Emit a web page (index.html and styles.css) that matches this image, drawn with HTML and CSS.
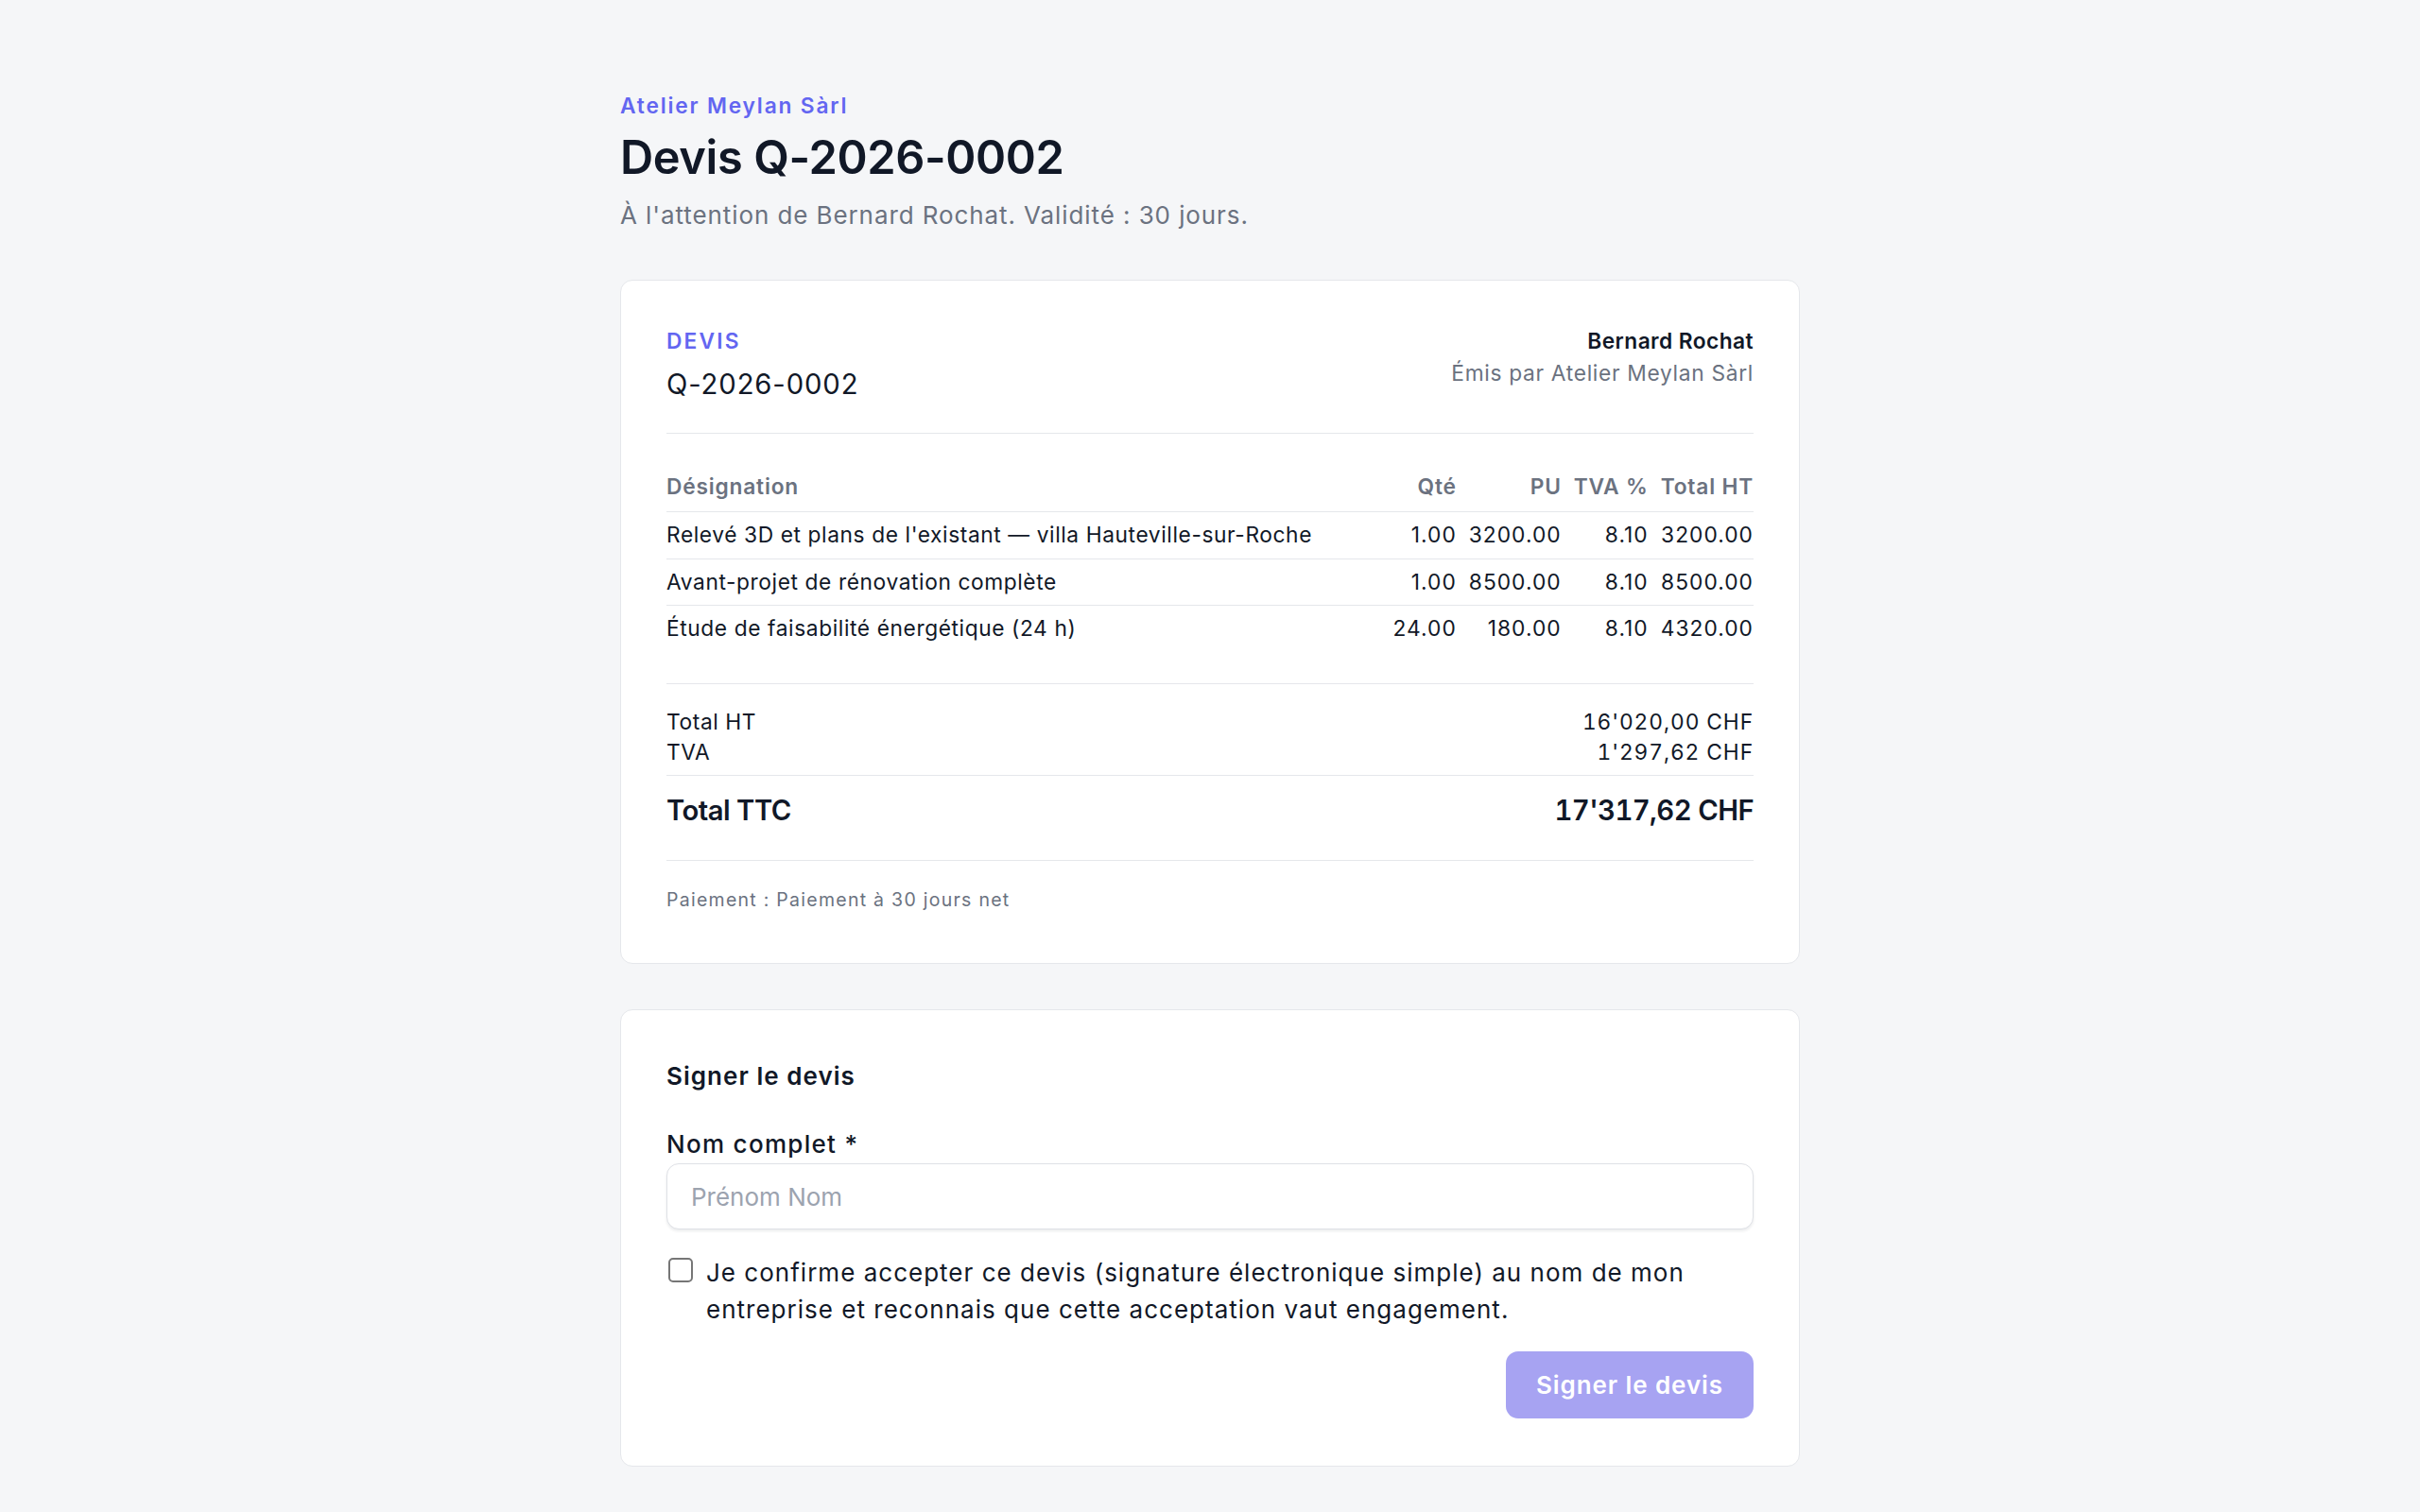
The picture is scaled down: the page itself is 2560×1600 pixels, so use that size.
FILE: index.html
```html
<!DOCTYPE html>
<html lang="fr">
<head>
    <meta charset="UTF-8">
    <title>Devis Q-2026-0002</title>
    <link rel="stylesheet" href="styles.css">
</head>
<body>
    <div class="page">
        <p class="brand">Atelier Meylan Sàrl</p>
        <h1 class="title">Devis Q-2026-0002</h1>
        <p class="lead">À l'attention de Bernard Rochat. Validité : 30 jours.</p>

        <!-- document du devis -->
        <div class="card">
            <div class="doc-head">
                <div>
                    <div class="doc-kind">Devis</div>
                    <div class="doc-number">Q-2026-0002</div>
                </div>
                <div class="doc-client">
                    <div class="client-name">Bernard Rochat</div>
                    <div class="client-from">Émis par Atelier Meylan Sàrl</div>
                </div>
            </div>

            <table class="lines">
                <thead>
                    <tr>
                        <th>Désignation</th>
                        <th class="num">Qté</th>
                        <th class="num">PU</th>
                        <th class="num">TVA %</th>
                        <th class="num">Total HT</th>
                    </tr>
                </thead>
                <tbody>
                    <tr>
                        <td>Relevé 3D et plans de l'existant — villa Hauteville-sur-Roche</td>
                        <td class="num">1.00</td>
                        <td class="num">3200.00</td>
                        <td class="num">8.10</td>
                        <td class="num">3200.00</td>
                    </tr>
                    <tr>
                        <td>Avant-projet de rénovation complète</td>
                        <td class="num">1.00</td>
                        <td class="num">8500.00</td>
                        <td class="num">8.10</td>
                        <td class="num">8500.00</td>
                    </tr>
                    <tr>
                        <td>Étude de faisabilité énergétique (24 h)</td>
                        <td class="num">24.00</td>
                        <td class="num">180.00</td>
                        <td class="num">8.10</td>
                        <td class="num">4320.00</td>
                    </tr>
                </tbody>
            </table>

            <div class="totals">
                <div class="total-row"><span>Total HT</span><span class="amount">16'020,00 CHF</span></div>
                <div class="total-row"><span>TVA</span><span class="amount">1'297,62 CHF</span></div>
                <div class="total-row grand"><span>Total TTC</span><span class="amount">17'317,62 CHF</span></div>
            </div>

            <p class="terms">Paiement : Paiement à 30 jours net</p>
        </div>

        <!-- signature -->
        <form class="card sign" onsubmit="return false">
            <h2 class="sign-title">Signer le devis</h2>
            <label class="field-label" for="fullname">Nom complet *</label>
            <input class="field" id="fullname" type="text" placeholder="Prénom Nom">
            <label class="agree">
                <input type="checkbox">
                <span>Je confirme accepter ce devis (signature électronique simple) au nom de mon entreprise et reconnais que cette acceptation vaut engagement.</span>
            </label>
            <div class="actions">
                <button class="btn" type="submit" disabled>Signer le devis</button>
            </div>
        </form>
    </div>
</body>
</html>
```

FILE: styles.css
```css
* {
    margin: 0;
    padding: 0;
    box-sizing: border-box;
}
body {
    background: #f5f6f8;
    color: #111827;
    font-family: "Inter", "Noto Sans", sans-serif;
    letter-spacing: 0.04em;
}
.page {
    width: 1248px;
    margin: 0 auto;
    padding: 96px 0 49px;
}

/*en-tête de page*/
.brand {
    font-size: 22.75px;
    line-height: 32.5px;
    font-weight: 600;
    letter-spacing: 0.08em;
    color: #6366f1;
}
.title {
    margin-top: 9px;
    font-size: 48.75px;
    line-height: 58.5px;
    font-weight: 600;
    letter-spacing: -0.4px;
}
.lead {
    margin-top: 12px;
    font-size: 26px;
    line-height: 39px;
    letter-spacing: 0.035em;
    color: #6b7280;
}

/*cartes*/
.card {
    display: block;
    margin-top: 49px;
    padding: 48px;
    background: #fff;
    border: 1px solid #e5e7eb;
    border-radius: 13px;
}
.card + .card {
    margin-top: 48px;
    padding-top: 50px;
    padding-bottom: 50px;
}

.doc-head {
    display: flex;
    justify-content: space-between;
    align-items: flex-start;
    padding-bottom: 29px;
    border-bottom: 1px solid #e5e7eb;
    letter-spacing: 0.026em;
}
.doc-kind {
    font-size: 22.75px;
    line-height: 32.5px;
    font-weight: 600;
    letter-spacing: 0.095em;
    text-transform: uppercase;
    color: #6366f1;
}
.doc-number {
    margin-top: 6px;
    font-size: 29.25px;
    line-height: 45px;
    letter-spacing: 0.03em;
}
.doc-client {
    text-align: right;
}
.client-name {
    font-size: 22.75px;
    line-height: 32.5px;
    font-weight: 600;
}
.client-from {
    margin-top: 1px;
    font-size: 22.75px;
    line-height: 32.5px;
    letter-spacing: 0.03em;
    color: #6b7280;
}

/*lignes du devis*/
.lines {
    width: 100%;
    margin-top: 32px;
    border-collapse: collapse;
    font-size: 22.75px;
    line-height: 32.5px;
    letter-spacing: 0.026em;
}
.lines th {
    padding: 8px 0 10px 13px;
    text-align: left;
    font-weight: 600;
    letter-spacing: 0.035em;
    color: #6b7280;
    border-bottom: 1px solid #e5e7eb;
}
.lines td {
    padding: 8px 0 8px 13px;
}
.lines tbody tr + tr td {
    border-top: 1px solid #e5e7eb;
}
.lines th:first-child,
.lines td:first-child {
    padding-left: 0;
}
.lines .num {
    width: 1%;
    white-space: nowrap;
    text-align: right;
}
.lines td.num {
    letter-spacing: 0.045em;
}

/*totaux*/
.totals {
    margin-top: 33px;
    padding-top: 24px;
    border-top: 1px solid #e5e7eb;
    font-size: 22.75px;
    line-height: 32px;
    letter-spacing: 0.026em;
}
.total-row {
    display: flex;
    justify-content: space-between;
}
.amount {
    font-variant-numeric: tabular-nums;
    letter-spacing: 0.04em;
}
.total-row.grand {
    margin-top: 8px;
    padding-top: 17px;
    border-top: 1px solid #e5e7eb;
    font-size: 29.25px;
    line-height: 40px;
    font-weight: 600;
    letter-spacing: -0.5px;
}
.grand .amount {
    letter-spacing: -0.6px;
}
.terms {
    margin-top: 32px;
    padding: 25px 0 3px;
    border-top: 1px solid #e5e7eb;
    font-size: 19.5px;
    line-height: 32.5px;
    letter-spacing: 0.065em;
    color: #6b7280;
}

/*signature*/
.sign-title {
    font-size: 26px;
    line-height: 39px;
    font-weight: 600;
    letter-spacing: 0.04em;
}
.field-label {
    display: block;
    margin-top: 33px;
    font-size: 26px;
    line-height: 39px;
    font-weight: 500;
    letter-spacing: 0.05em;
}
.field {
    display: block;
    width: 100%;
    height: 70px;
    margin-top: 1px;
    padding: 0 25px;
    font: inherit;
    font-size: 26px;
    color: #111827;
    background: #fff;
    border: 1px solid #dfe1e6;
    border-radius: 13px;
    box-shadow: 0 2px 3px rgba(17, 24, 39, 0.08);
    outline: none;
}
.field::placeholder {
    color: #9ca3af;
}
.agree {
    display: flex;
    gap: 14px;
    margin-top: 26px;
    font-size: 26px;
    line-height: 39px;
    letter-spacing: 0.039em;
}
.agree input {
    flex: none;
    appearance: none;
    width: 26px;
    height: 26px;
    margin: 4px 0 0 2px;
    border: 2px solid #767676;
    border-radius: 5px;
    background: #fff;
}
.actions {
    display: flex;
    justify-content: flex-end;
    margin-top: 25px;
}
.btn {
    padding: 16px 32px;
    font: inherit;
    font-size: 26px;
    line-height: 39px;
    font-weight: 600;
    letter-spacing: 0.035em;
    color: #fff;
    background: #a7a3f2;
    border: none;
    border-radius: 13px;
}
```
